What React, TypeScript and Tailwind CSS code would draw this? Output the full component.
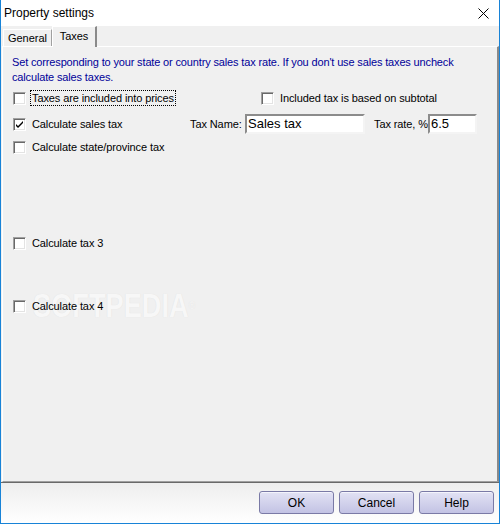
import React from "react";

const font = { fontFamily: '"Liberation Sans", Arial, sans-serif' };

function CheckBox({ checked = false }: { checked?: boolean }) {
  return (
    <span className="w-[13px] h-[13px] shrink-0 bg-white border border-t-[#a0a0a0] border-l-[#a0a0a0] border-r-[#ffffff] border-b-[#ffffff] shadow-[inset_1px_1px_0_#696969,inset_-1px_-1px_0_#e3e3e3] flex items-center justify-center">
      {checked && (
        <svg width="9" height="9" viewBox="0 0 9 9">
          <path d="M1 4 L3 6 L8 1 L8 3 L3 8 L1 6 Z" fill="#000" />
        </svg>
      )}
    </span>
  );
}

function Check({ label, checked, focused }: { label: string; checked?: boolean; focused?: boolean }) {
  return (
    <div className="flex items-center h-[16px]">
      <CheckBox checked={checked} />
      {focused ? (
        <span className="ml-[4px] px-[1px] h-[16px] leading-[14px] border border-dotted border-black whitespace-nowrap">{label}</span>
      ) : (
        <span className="ml-[6px] whitespace-nowrap">{label}</span>
      )}
    </div>
  );
}

function Field({ value, width }: { value: string; width: string }) {
  return (
    <div
      className={`${width} h-[20px] bg-white border-2 border-t-[#8c8c8c] border-l-[#8c8c8c] border-r-[#f4f4f4] border-b-[#f4f4f4] flex items-center pl-[1px] text-[13px] tracking-normal`}
    >
      {value}
    </div>
  );
}

function DlgButton({ label }: { label: string }) {
  return (
    <button className="w-[75px] h-[23px] rounded-[3px] border border-[#7a7aa6] bg-gradient-to-b from-[#e2e2f4] to-[#c3c3e4] text-[12px] text-black shadow-[inset_0_1px_0_#f4f4fc]">
      {label}
    </button>
  );
}

export default function App() {
  return (
    <div className="w-[500px] h-[524px] flex flex-col bg-[#f0f0f0] border-x border-b border-[#1883d7] text-[11px] text-black relative" style={font}>
      {/* title bar */}
      <div className="h-[26px] bg-white flex items-center justify-between pl-[3px] pr-[10px] shrink-0">
        <span className="text-[12px]">Property settings</span>
        <svg width="11" height="11" viewBox="0 0 11 11">
          <path d="M0.5 0.5 L10.5 10.5 M10.5 0.5 L0.5 10.5" stroke="#000" strokeWidth="1" />
        </svg>
      </div>

      {/* tabs */}
      <div className="h-[20px] flex items-end pl-[2px] shrink-0 relative z-10">
        <div className="h-[17px] w-[49px] border-t border-l border-white border-r border-r-[#a0a0a0] flex items-center justify-center">
          General
        </div>
        <div className="h-[21px] w-[45px] -mb-[1px] bg-[#f0f0f0] border-t border-l border-white border-r-2 border-r-[#8a8a8a] flex items-center justify-center pb-[2px]">
          Taxes
        </div>
      </div>

      {/* panel */}
      <div className="flex-1 ml-[1px] border-t border-l border-white border-r-2 border-r-[#8a8a8a] border-b border-b-[#a0a0a0] relative">
        {/* watermark, behind the controls */}
        <div
          className="absolute left-[30px] top-[241px] text-[34px] leading-[34px] font-bold text-[#f7f7f7] pointer-events-none select-none origin-left scale-x-[0.8] whitespace-nowrap"
          style={{ fontFamily: '"Liberation Sans", sans-serif', textShadow: "0 0 1px #dddddd" }}
        >
          SOFTPEDIA<span className="text-[11px] align-top font-normal">®</span>
        </div>

        <div className="relative pl-[10px] pt-[8px] tracking-[-0.1px]">
          <p className="text-[#000099] leading-[15px] -ml-[1px] whitespace-nowrap tracking-[-0.15px]">
            Set corresponding to your state or country sales tax rate. If you don't use sales taxes uncheck
            <br />
            calculate sales taxes.
          </p>

          <div className="flex mt-[5px]">
            <div className="w-[248px]">
              <Check label="Taxes are included into prices" focused />
            </div>
            <Check label="Included tax is based on subtotal" />
          </div>

          <div className="flex items-center mt-[8px] h-[20px]">
            <div className="w-[177px]">
              <Check label="Calculate sales tax" checked />
            </div>
            <span className="w-[55px]">Tax Name:</span>
            <Field value="Sales tax" width="w-[120px]" />
            <span className="ml-[9px] w-[54px] whitespace-nowrap">Tax rate, %</span>
            <Field value="6.5" width="w-[49px]" />
          </div>

          <div className="mt-[5px]">
            <Check label="Calculate state/province tax" />
          </div>

          <div className="mt-[80px]">
            <Check label="Calculate tax 3" />
          </div>

          <div className="mt-[47px]">
            <Check label="Calculate tax 4" />
          </div>
        </div>
      </div>

      {/* bottom bar */}
      <div className="h-[41px] shrink-0 border-t border-[#696969] bg-gradient-to-b from-[#eeeeee] to-[#ffffff] flex justify-end items-start pt-[8px] pr-[5px] gap-[5px]">
        <DlgButton label="OK" />
        <DlgButton label="Cancel" />
        <DlgButton label="Help" />
      </div>
    </div>
  );
}
